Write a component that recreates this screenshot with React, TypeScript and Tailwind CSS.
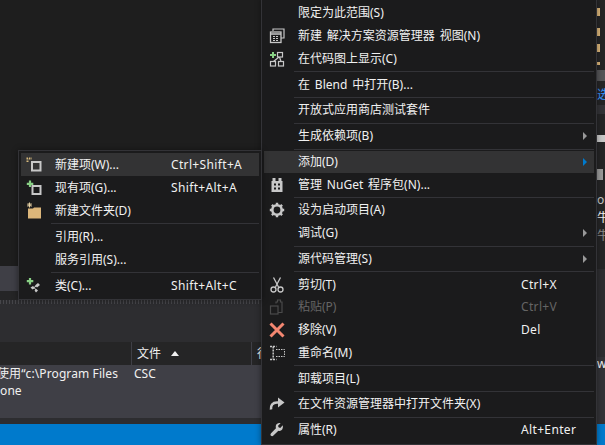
import React from "react";

const Svg = ({ children }: { children: React.ReactNode }) => (
  <svg width="20" height="20" viewBox="0 0 20 20" fill="none" className="block">
    {children}
  </svg>
);

const Gray = "#c8c8c8";

const ViewIcon = () => (
  <Svg>
    <path d="M6 5V3h11v9h-3" stroke={Gray} strokeWidth="1.2" />
    <rect x="3.5" y="6" width="10.5" height="10.5" stroke={Gray} strokeWidth="1.3" />
    <path d="M4 8h10" stroke={Gray} strokeWidth="1.5" />
    <path d="M6 10.5h6M6 12.5h6M6 14.5h6" stroke={Gray} strokeWidth="1" strokeDasharray="2 1" />
  </Svg>
);

const MapIcon = () => (
  <Svg>
    <path d="M6 3v6M3 6h6" stroke="#89d185" strokeWidth="2" />
    <rect x="10.5" y="3.5" width="5" height="4.5" stroke={Gray} strokeWidth="1.2" />
    <rect x="3.5" y="12.5" width="5" height="4.5" stroke={Gray} strokeWidth="1.2" />
    <rect x="11.5" y="12.5" width="5" height="4.5" stroke={Gray} strokeWidth="1.2" />
    <path d="M12 8l-5.500 4.500M12.500 8l1.500 4.500" stroke={Gray} strokeWidth="1.2" />
  </Svg>
);

const NugetIcon = () => (
  <Svg>
    <path d="M4.500 6h11v11h-11z" fill={Gray} />
    <path d="M5.500 3h3v3h-3zM11.500 3h3v3h-3z" fill={Gray} />
    <path d="M7 8.500h2V10.500H7zM11 8.500h2V10.500h-2zM7 12.500h2V14.500H7zM11 12.500h2V14.500h-2z" fill="#1b1b1c" />
  </Svg>
);

const GearIcon = () => (
  <Svg>
    <circle cx="10" cy="10" r="4.700" stroke={Gray} strokeWidth="2.600" />
    <path d="M10 2.800v2.500M10 14.700v2.500M2.800 10h2.500M14.700 10h2.500M4.900 4.900l1.800 1.800M13.300 13.300l1.800 1.800M15.100 4.900l-1.800 1.800M6.700 13.300l-1.800 1.800" stroke={Gray} strokeWidth="2.400" />
  </Svg>
);

const ScissorsIcon = () => (
  <Svg>
    <path d="M6.500 2.500l5 9.500M13.500 2.500l-5 9.500" stroke={Gray} strokeWidth="1.300" />
    <circle cx="6.500" cy="14.500" r="2.500" stroke={Gray} strokeWidth="1.300" />
    <circle cx="13.500" cy="14.500" r="2.500" stroke={Gray} strokeWidth="1.300" />
  </Svg>
);

const PasteIcon = () => (
  <Svg>
    <path d="M9 6.500V5h1.500V3h3v2H15v10.500h-4" stroke="#4a4a4a" strokeWidth="1.200" />
    <rect x="3.500" y="9" width="7.500" height="8" stroke="#4a4a4a" strokeWidth="1.200" />
  </Svg>
);

const RemoveIcon = () => (
  <Svg>
    <path d="M3.500 3.500l13 13M16.500 3.500l-13 13" stroke="#f48771" strokeWidth="3" />
  </Svg>
);

const RenameIcon = () => (
  <Svg>
    <path d="M3 3.500h6.500M3 16.500h6.500M6.200 3.500v13" stroke={Gray} strokeWidth="1.500" strokeDasharray="2 1" />
    <path d="M9 6.500h8.500v7H9" stroke={Gray} strokeWidth="1" strokeDasharray="1.500 1" />
  </Svg>
);

const RedoIcon = () => (
  <Svg>
    <path d="M4 15.500c-.5-4 1.500-7 6-7h3" stroke={Gray} strokeWidth="2.600" />
    <path d="M11 3.500l6.500 5-6.500 5z" fill={Gray} />
  </Svg>
);

const WrenchIcon = () => (
  <Svg>
    <path
      transform="translate(1.500 1.500) scale(.85)"
      d="M16.800 4.500l-3 3-2-.6-.6-2 3-2.800c-2.500-.8-5.800.8-5.700 4 0 .8.100 1.300.3 1.900L3 13.800c-.9 1-.9 2.100-.1 2.900.8.800 2 .8 2.900-.1l5.800-5.600c3.300 1 6-1.600 5.200-6.500z"
      fill={Gray}
    />
  </Svg>
);

const NewItemIcon = () => (
  <Svg>
    <rect x="8" y="7" width="8.500" height="8.500" stroke={Gray} strokeWidth="2" />
    <path d="M3.500 7V3.500H8" stroke="#d7ba7d" strokeWidth="2" strokeDasharray="1.500 1" />
  </Svg>
);

const ExistingItemIcon = () => (
  <Svg>
    <path d="M6 2.500v6.500M2.800 5.800h6.500" stroke="#89d185" strokeWidth="2.200" />
    <rect x="8.500" y="8" width="8" height="8" stroke={Gray} strokeWidth="2" />
  </Svg>
);

const FolderIcon = () => (
  <Svg>
    <path d="M4 7.500h5l1-1h7v11H4z" fill="#dcb67a" />
    <path d="M5.500 1.500v5M3 4h5M3.800 2.200l3.500 3.500M7.300 2.200L3.800 5.700" stroke="#e8d3a5" strokeWidth="1" />
  </Svg>
);

const ClassIcon = () => (
  <Svg>
    <path d="M6 2v6.500M2.800 5.200h6.500" stroke="#89d185" strokeWidth="2.200" />
    <path d="M11 9.500l3-2.500 2 2-3 2.500zM6.500 11.500l2.500-1.500 2 2-2.500 1.500zM10.500 14.500l2-1.500 1.500 1.500-2 2z" fill={Gray} />
    <path d="M9 12l3.500-2M10.500 12l1.500 2" stroke={Gray} strokeWidth="1" />
  </Svg>
);

type Item = {
  label: string;
  icon?: React.ReactNode;
  shortcut?: string;
  arrow?: boolean;
  active?: boolean;
  disabled?: boolean;
};

const MenuRow = ({ item, main }: { item: Item; main?: boolean }) => (
  <div
    className={`flex items-center ${main ? "h-[22.75px]" : "h-[23px]"} ${
      item.active ? "bg-[#333334]" : ""
    } ${item.disabled ? "text-[#656565]" : "text-[#f1f1f1]"}`}
  >
    <div className="w-[34px] pl-[3px] shrink-0">{item.icon}</div>
    <div className={`${main ? "w-[223px]" : "w-[116px]"} shrink-0 whitespace-nowrap [word-spacing:1.75px]`}>
      {item.label}
    </div>
    <div className="whitespace-nowrap flex-1 tracking-[0.35px]">{item.shortcut}</div>
    {item.arrow && (
      <div
        className={`w-0 h-0 mr-[7px] border-y-[4px] border-y-transparent border-l-[4px] ${
          item.active ? "border-l-[#007acc]" : "border-l-[#999999]"
        }`}
      />
    )}
  </div>
);

const MenuSep = () => (
  <div className="flex items-center h-[3px] pl-[30px]">
    <div className="h-px flex-1 bg-[#333337]" />
  </div>
);

const mainMenu: (Item | "sep")[] = [
  { label: "限定为此范围(S)" },
  { label: "新建 解决方案资源管理器 视图(N)", icon: <ViewIcon /> },
  { label: "在代码图上显示(C)", icon: <MapIcon /> },
  "sep",
  { label: "在 Blend 中打开(B)..." },
  "sep",
  { label: "开放式应用商店测试套件" },
  "sep",
  { label: "生成依赖项(B)", arrow: true },
  "sep",
  { label: "添加(D)", arrow: true, active: true },
  { label: "管理 NuGet 程序包(N)...", icon: <NugetIcon /> },
  "sep",
  { label: "设为启动项目(A)", icon: <GearIcon /> },
  { label: "调试(G)", arrow: true },
  "sep",
  { label: "源代码管理(S)", arrow: true },
  "sep",
  { label: "剪切(T)", icon: <ScissorsIcon />, shortcut: "Ctrl+X" },
  { label: "粘贴(P)", icon: <PasteIcon />, shortcut: "Ctrl+V", disabled: true },
  { label: "移除(V)", icon: <RemoveIcon />, shortcut: "Del" },
  { label: "重命名(M)", icon: <RenameIcon /> },
  "sep",
  { label: "卸载项目(L)" },
  "sep",
  { label: "在文件资源管理器中打开文件夹(X)", icon: <RedoIcon /> },
  "sep",
  { label: "属性(R)", icon: <WrenchIcon />, shortcut: "Alt+Enter" },
];

const subMenu: (Item | "sep")[] = [
  { label: "新建项(W)...", icon: <NewItemIcon />, shortcut: "Ctrl+Shift+A", active: true },
  { label: "现有项(G)...", icon: <ExistingItemIcon />, shortcut: "Shift+Alt+A" },
  { label: "新建文件夹(D)", icon: <FolderIcon /> },
  "sep",
  { label: "引用(R)..." },
  { label: "服务引用(S)..." },
  "sep",
  { label: "类(C)...", icon: <ClassIcon />, shortcut: "Shift+Alt+C" },
];

const RightStrip = () => (
  <div className="w-[8px] shrink-0 flex flex-col overflow-hidden bg-[#252526] text-[12px] leading-[14px] whitespace-nowrap">
    <div className="h-[8px]" />
    <div className="h-[8px] w-[3px] bg-[#dcb67a]" />
    <div className="h-[12px]" />
    <div className="h-[8px] w-[3px] bg-[#dcb67a]" />
    <div className="h-[8px]" />
    <div className="h-[8px] w-[3px] bg-[#dcb67a]" />
    <div className="h-[10px]" />
    <div className="h-[3px] w-[3px] bg-[#dcb67a]" />
    <div className="h-[5px]" />
    <div className="h-[11px] bg-[#555558]" />
    <div className="h-[7px]" />
    <div className="h-[14px] text-[#3794ff]">选</div>
    <div className="h-[3px]" />
    <div className="h-[9px] bg-[#333337]" />
    <div className="h-[21px]" />
    <div className="h-[7px] bg-[#c8c8c8]" />
    <div className="h-[27px]" />
    <div className="h-[11px] w-[6px] bg-[#9a9a9a]" />
    <div className="h-[13px]" />
    <div className="h-[14px] text-[#c8c8c8]">or</div>
    <div className="h-[4px]" />
    <div className="h-[14px] text-[#f1f1f1]">牛</div>
    <div className="h-[4px]" />
    <div className="h-[14px] text-[#8a8a8a]">牛</div>
    <div className="h-[26px]" />
    <div className="h-[88px] bg-[#2d2d30]" />
    <div className="h-[14px] bg-[#333337] text-[#f1f1f1]">w</div>
    <div className="flex-1 bg-[#333337]" />
  </div>
);

export default function App() {
  return (
    <div className="relative w-[605px] h-[445px] overflow-hidden bg-[#1e1e1e] text-[12px] font-['Noto_Sans','Noto_Sans_CJK_SC',sans-serif]">
      <div className="flex h-[424px]">
        <div className="w-[597px] shrink-0 flex flex-col">
          <div className="h-[266px] bg-[#1e1e1e]" />
          <div className="h-[25px] bg-[#3f3f46]" />
          <div className="h-[9px] bg-[#252526]" />
          <div className="h-[4px] bg-[#2d2d30] bg-[repeating-linear-gradient(90deg,#46464a_0_1px,transparent_1px_3px)]" />
          <div className="h-[38px] bg-[#2d2d30]" />
          <div className="h-[23px] bg-[#252526] flex text-[#f1f1f1] items-center">
            <div className="w-[132px] h-full border-r border-[#3f3f46]" />
            <div className="w-[120px] h-full border-r border-[#3f3f46] flex items-center pl-[5px] gap-[10px]">
              <span>文件</span>
              <span className="w-0 h-0 border-x-[4.5px] border-x-transparent border-b-[5px] border-b-[#f1f1f1]" />
            </div>
            <div className="pl-[5px]">行</div>
          </div>
          <div className="h-[53px] bg-[#3f3f46] text-[#f1f1f1] flex leading-[17px]">
            <div className="w-[134px] overflow-hidden whitespace-nowrap">
              <div className="-ml-[3px] tracking-[0.1px]">使用“c:\Program Files</div>
              <div className="-ml-[9px]">None</div>
            </div>
            <div>CSC</div>
          </div>
          <div className="h-[6px] bg-[#2d2d30]" />
        </div>
        <RightStrip />
      </div>
      <div className="h-[21px] bg-[#007acc]" />

      {/* 右键主菜单 */}
      <div className="absolute left-[261px] top-[-1px] w-[336px] border border-[#333337] bg-[#1b1b1c] p-[2px] shadow-[0_0_6px_rgba(0,0,0,0.4)]">
        {mainMenu.map((item, i) =>
          item === "sep" ? <MenuSep key={i} /> : <MenuRow key={i} item={item} main />
        )}
      </div>

      {/* 添加 子菜单 */}
      <div className="absolute left-[18px] top-[150px] w-[244px] border border-[#333337] bg-[#1b1b1c] p-[2px] shadow-[0_0_6px_rgba(0,0,0,0.4)]">
        {subMenu.map((item, i) =>
          item === "sep" ? <MenuSep key={i} /> : <MenuRow key={i} item={item} />
        )}
      </div>
    </div>
  );
}
